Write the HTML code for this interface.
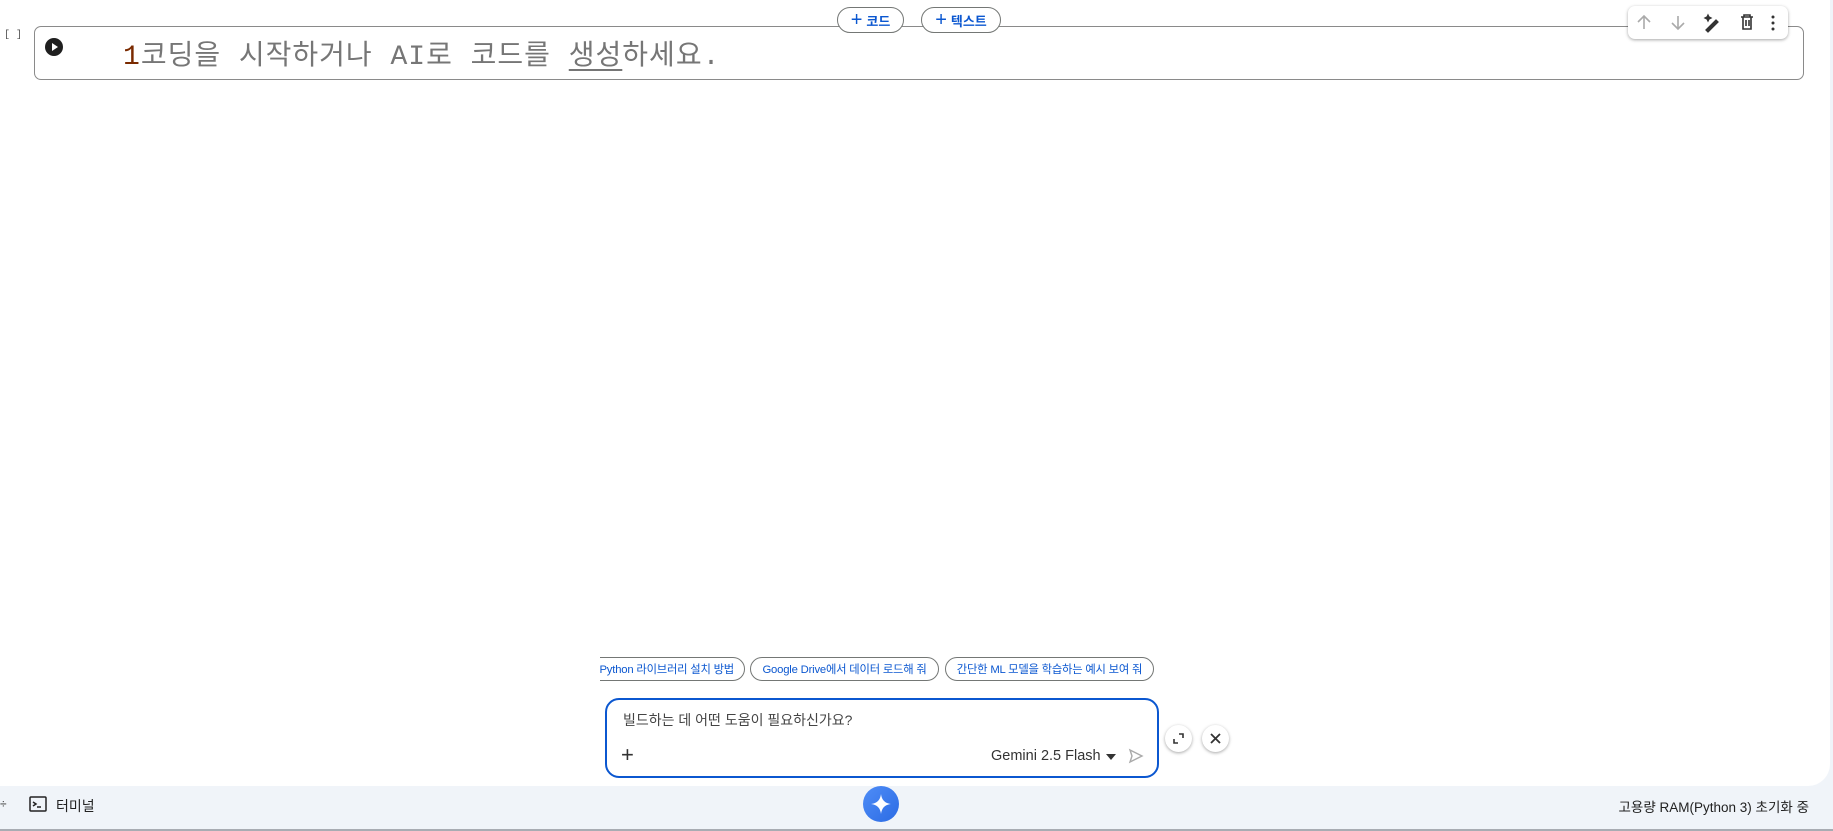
<!DOCTYPE html>
<html><head><meta charset="utf-8"><style>
*{box-sizing:border-box;margin:0;padding:0}
body{width:1833px;height:831px;overflow:hidden;background:#f0f4f9;font-family:"Liberation Sans","Noto Sans CJK KR",sans-serif;position:relative}
.main{position:absolute;left:0;top:0;width:1830px;height:786px;background:#fff;border-radius:0 0 22px 0}
.cell{position:absolute;left:34px;top:26px;width:1770px;height:54px;border:1px solid #8a8a8a;border-radius:7px}
.code{position:absolute;left:123px;top:33px;font-family:"Liberation Mono","Noto Sans CJK KR",monospace;font-size:28px;color:#767676;letter-spacing:1px;white-space:nowrap}
.pill{position:absolute;top:7px;height:26px;border:1px solid #747775;border-radius:13px;background:#fff;color:#0b57d0;font-size:13px;font-weight:bold;display:flex;align-items:center;justify-content:center;gap:4px}
.pill b{font-size:20px;font-weight:normal;line-height:1}
.tb{position:absolute;left:1628px;top:6px;width:160px;height:33px;background:#fff;border-radius:7px;box-shadow:0 1px 3px rgba(0,0,0,.35)}
.chip{position:absolute;top:7px;height:24px;border:1px solid #747775;border-radius:12px;color:#0b57d0;font-size:11.3px;letter-spacing:-0.2px;display:flex;align-items:center;justify-content:center;white-space:nowrap;background:#fff;overflow:hidden}
.inp{position:absolute;left:605px;top:698px;width:554px;height:80px;border:2px solid #0b57d0;border-radius:14px;background:#fff}
.circ{position:absolute;width:27px;height:27px;border-radius:50%;background:#fff;box-shadow:0 1px 3px rgba(0,0,0,.35)}
</style></head><body>
<div class="main"></div>
<div style="position:absolute;left:4px;top:30px;font-size:10px;color:#555;font-family:'Liberation Mono',monospace">[ ]</div>
<div class="cell"></div>
<svg style="position:absolute;left:45px;top:38px" width="18" height="18" viewBox="0 0 18 18"><circle cx="9" cy="9" r="9" fill="#1f1f1f"/><path d="M7 5 L13 9 L7 13Z" fill="#fff"/></svg>
<div class="code"><span style="color:#7a2a00">1</span>코딩을 시작하거나 AI로 코드를 <span style="text-decoration:underline;text-underline-offset:5px">생성</span>하세요.</div>
<div class="pill" style="left:837px;width:67px"><b>+</b>코드</div>
<div class="pill" style="left:921px;width:80px"><b>+</b>텍스트</div>
<div class="tb">
<svg width="160" height="33" viewBox="0 0 160 33" fill="none" stroke-width="1.6">
<path d="M16 23V10M10 16l6-6 6 6" stroke="#aaa"/>
<path d="M50 10v13M44 17l6 6 6-6" stroke="#aaa"/>
<path d="M78 24l10-10 2 2-10 10zM80 9l1 2 2 1-2 1-1 2-1-2-2-1 2-1z" stroke="#333" fill="#333" stroke-width="1.3"/>
<path d="M113 11h12M116 11v-2h6v2M115 11v12h8V11M118 14v6M121 14v6" stroke="#333"/>
<circle cx="145" cy="11" r="1.5" fill="#333" stroke="none"/><circle cx="145" cy="17" r="1.5" fill="#333" stroke="none"/><circle cx="145" cy="23" r="1.5" fill="#333" stroke="none"/>
</svg></div>
<div style="position:absolute;left:600px;top:650px;width:565px;height:40px;overflow:hidden">
<div class="chip" style="left:-30px;width:175px;justify-content:flex-end;padding-right:10px">Python 라이브러리 설치 방법</div>
<div class="chip" style="left:150px;width:189px">Google Drive에서 데이터 로드해 줘</div>
<div class="chip" style="left:345px;width:209px">간단한 ML 모델을 학습하는 예시 보여 줘</div>
</div>
<div class="inp">
<div style="position:absolute;left:16px;top:10px;font-size:14px;color:#444">빌드하는 데 어떤 도움이 필요하신가요?</div>
<div style="position:absolute;left:14px;top:42px;font-size:22px;color:#333;font-weight:300">+</div>
<div style="position:absolute;left:384px;top:48px;font-size:14.5px;color:#333">Gemini 2.5 Flash</div>
<svg style="position:absolute;left:498px;top:53px" width="12" height="8"><path d="M1 1h10L6 7z" fill="#333"/></svg>
<svg style="position:absolute;left:521px;top:48px" width="16" height="16" fill="none" stroke="#aaa" stroke-width="1.4"><path d="M2 2L14 8 2 14 4 8z"/></svg>
</div>
<div class="circ" style="left:1165px;top:725px"><svg width="27" height="27" fill="none" stroke="#333" stroke-width="1.6"><path d="M9 14v4h4M18 13V9h-4"/></svg></div>
<div class="circ" style="left:1202px;top:725px"><svg width="27" height="27" fill="none" stroke="#333" stroke-width="1.8"><path d="M9 9l9 9M18 9l-9 9"/></svg></div>
<div style="position:absolute;left:0;top:829px;width:1833px;height:2px;background:#a8acb3"></div>
<svg style="position:absolute;left:29px;top:796px" width="18" height="16" fill="none" stroke="#222" stroke-width="1.5"><rect x="1" y="1" width="16" height="14" rx="1"/><path d="M4 6l3 2-3 2M8 11h4"/></svg>
<div style="position:absolute;left:56px;top:796px;font-size:14px;color:#222">터미널</div>
<div style="position:absolute;left:0;top:797px;font-size:12px;color:#333">÷</div>
<div style="position:absolute;left:863px;top:786px;width:36px;height:36px;border-radius:50%;background:linear-gradient(135deg,#4f8df7,#2b6be4)"><svg width="36" height="36"><path d="M18 8Q19 17 28 18Q19 19 18 28Q17 19 8 18Q17 17 18 8z" fill="#fff"/></svg></div>
<div style="position:absolute;right:24px;top:796px;font-size:13.5px;color:#222">고용량 RAM(Python 3) 초기화 중</div>
</body></html>
